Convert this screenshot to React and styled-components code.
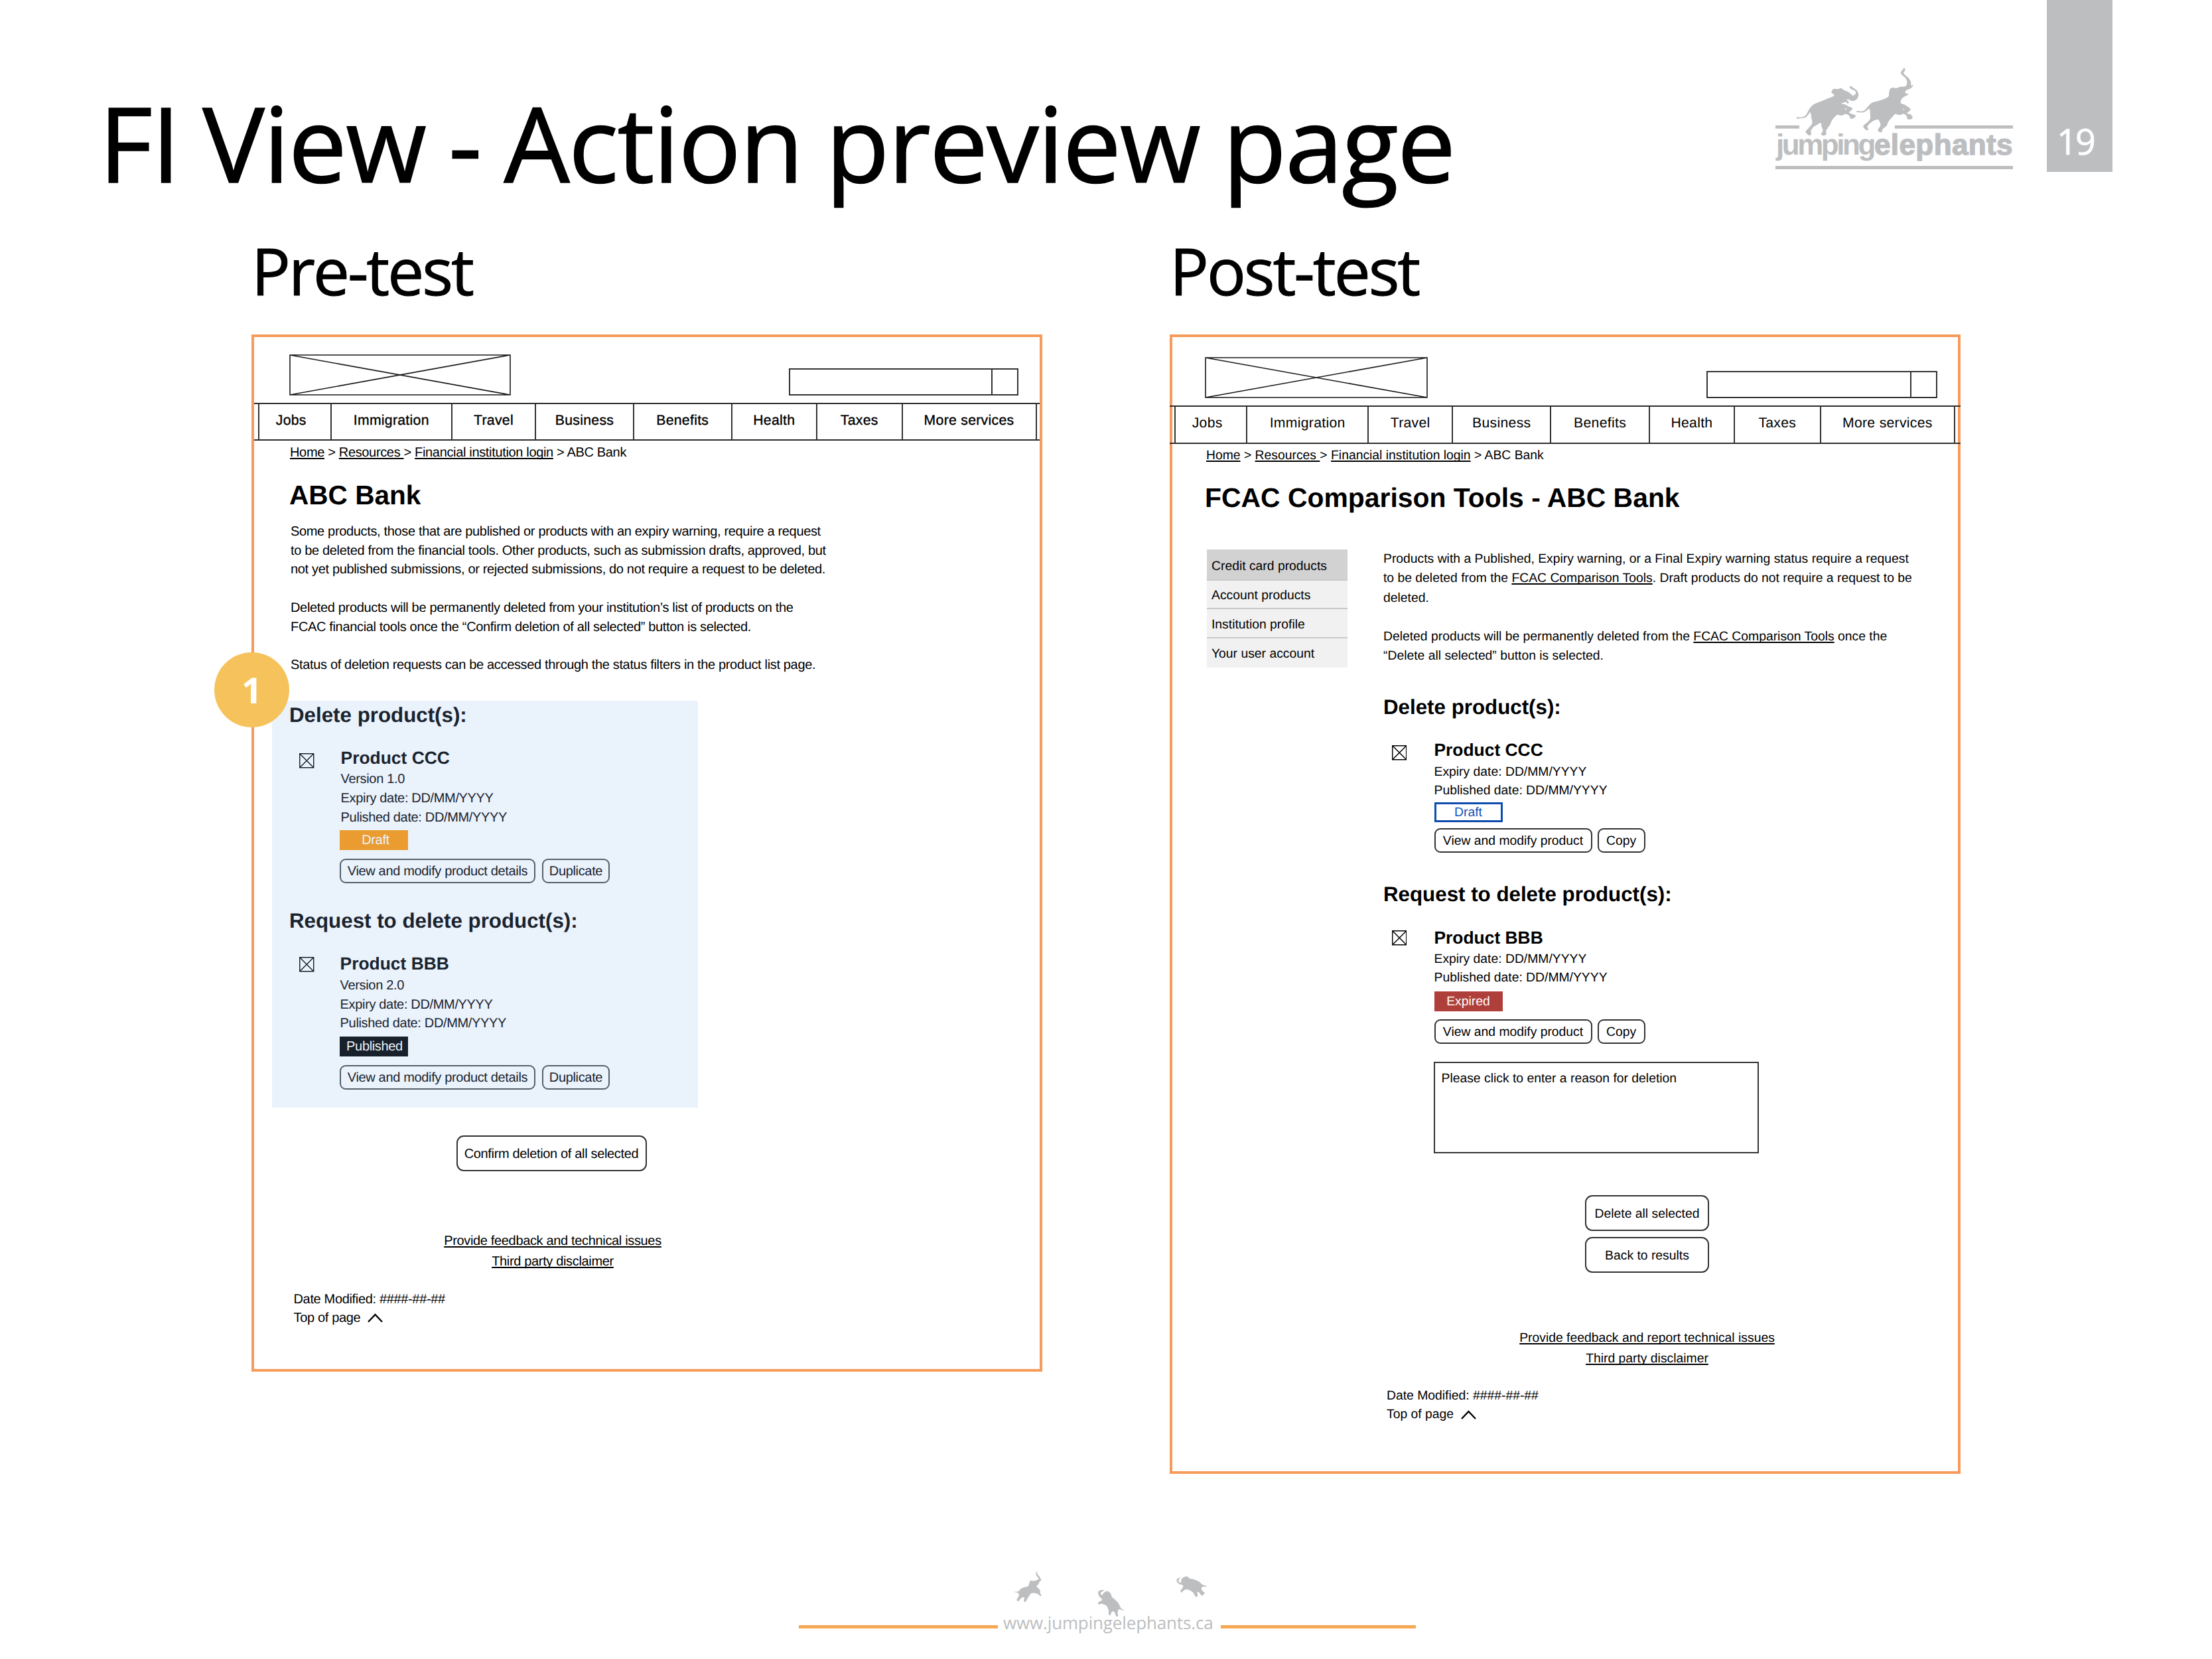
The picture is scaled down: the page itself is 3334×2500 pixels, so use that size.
import React from 'react';
import styled, { createGlobalStyle, css } from 'styled-components';

const Global = createGlobalStyle`
  *, *::before, *::after { box-sizing: border-box; }
  body { margin: 0; background: #fff; }
  h1, h2, h3, h4, p { margin: 0; font-weight: inherit; }
`;

const display = '"Open Sans", "Noto Sans", sans-serif';
const wire = '"Liberation Sans", Arial, sans-serif';
const grey = '#bcbec0';
const orange = '#f79b5b';

const Slide = styled.main`
  width: 3334px;
  height: 2500px;
  overflow: hidden;
  background: #fff;
  color: #000;
  font-family: ${wire};
  text-rendering: geometricPrecision;
  display: flex;
  flex-direction: column;
`;

/* ---------- slide header ---------- */

const SlideHeader = styled.header`
  display: flex;
  align-items: flex-start;
  height: 317px;
  flex: none;
  padding: 0 150px 0 149px;
`;

const SlideTitle = styled.h1`
  margin: 124px auto 0 0;
  font: 400 157px/180px ${display};
  letter-spacing: -1.82px;
  word-spacing: -4px;
  -webkit-text-stroke: 1.5px #000;
  white-space: nowrap;
`;

const Logo = styled.div`
  width: 358px;
  margin: 100px 51px 0 0;
  display: flex;
  flex-direction: column;
  color: ${grey};
`;

const LogoArt = styled.svg`
  display: block;
  width: 358px;
  height: 106.67px;
  overflow: visible;
`;

const Wordmark = styled.div`
  display: flex;
  margin-top: -12.7px;
  font: 700 44px/50px ${wire};
  white-space: nowrap;
`;

const WordLight = styled.span`
  width: 149.4px;
  letter-spacing: -3.46px;
  padding-left: 1px;
`;

const WordHeavy = styled.span`
  -webkit-text-stroke: 1.4px ${grey};
  letter-spacing: 0.4px;
`;

const LogoRule = styled.div`
  height: 5px;
  margin-top: 6px;
  background: ${grey};
`;

const PageTab = styled.div`
  width: 99px;
  height: 259px;
  padding: 0 0 12px 15px;
  display: flex;
  align-items: flex-end;
  background: ${grey};
  color: #fff;
  font: 400 54px/70px ${display};
  letter-spacing: -2.9px;
  -webkit-text-stroke: 0.7px #fff;
`;

/* ---------- columns ---------- */

const Columns = styled.section`
  display: flex;
  gap: 192px;
  height: 1910px;
  flex: none;
  align-items: flex-start;
  padding-left: 379px;
`;

const Column = styled.div`
  width: 1192px;
  flex: none;
`;

const ColumnTitle = styled.h2`
  margin-bottom: 7px;
  font: 400 98px/180px ${display};
  letter-spacing: -3.05px;
  -webkit-text-stroke: 1px #000;
`;

const Frame = styled.article`
  position: relative;
  height: ${(p) => p.$height}px;
  border: 4px solid ${orange};
  font-size: ${(p) => p.$size}px;
  letter-spacing: ${(p) => p.$tracking || 0}px;
  line-height: ${(p) => p.$line}px;
  white-space: nowrap;
`;

const Masthead = styled.div`
  display: flex;
  justify-content: space-between;
  align-items: flex-end;
  height: ${(p) => p.$height}px;
  padding: 0 ${(p) => p.$right}px 11px ${(p) => p.$left}px;
`;

const Placeholder = styled.svg`
  display: block;
  width: ${(p) => p.$width}px;
  height: 62px;
`;

const Search = styled.div`
  display: flex;
  width: ${(p) => p.$width}px;
  height: 41px;
  border: 2px solid #333;
`;

const SearchField = styled.div`
  flex: 1;
  border-right: 2px solid #333;
`;

const SearchButton = styled.div`
  width: 37px;
`;

const NavBar = styled.nav`
  display: grid;
  grid-template-columns: ${(p) => p.$columns};
  height: ${(p) => p.$height}px;
  margin: 0 ${(p) => p.$bleed}px;
  border: solid #2e2e2e;
  border-width: 2px 0;
  font-size: 21.2px;
  letter-spacing: 0.3px;
  line-height: 50px;
  text-align: center;
  -webkit-text-stroke: ${(p) => p.$stroke}px #000;
`;

const NavCell = styled.div`
  border-left: ${(p) => (p.$edge ? 0 : 2)}px solid #333;
  padding-right: ${(p) => (p.$first ? 11 : 0)}px;
`;

const Crumbs = styled.div`
  margin: ${(p) => p.$top}px 0 0 ${(p) => p.$left}px;
  line-height: 28.8px;
  white-space: pre;
`;

const Link = styled.a`
  text-decoration: underline;
  text-decoration-thickness: 1.5px;
  text-underline-offset: 1.5px;
  text-decoration-skip-ink: none;
`;

const BankTitle = styled.h3`
  margin: ${(p) => p.$top}px 0 0 ${(p) => p.$left}px;
  font-weight: 700;
  font-size: ${(p) => p.$size}px;
  letter-spacing: 0;
  line-height: 50px;
`;

const Body = styled.div`
  display: flex;
  align-items: flex-start;
  margin-top: ${(p) => p.$top}px;
  padding-left: ${(p) => p.$left}px;
`;

const Main = styled.div`
  width: ${(p) => p.$width}px;
  flex: none;
`;

const Copy = styled.div`
  display: flex;
  flex-direction: column;
  gap: ${(p) => p.$gap}px;
  padding: ${(p) => p.$top}px 0 0 ${(p) => p.$inset}px;
`;

const SideNav = styled.nav`
  width: 212px;
  margin: 1px 54px 0 0;
  flex: none;
  background: #f1f1f1;
`;

const SideItem = styled.div`
  display: flex;
  align-items: center;
  height: ${(p) => p.$height}px;
  padding: ${(p) => (p.$active ? 6 : 4)}px 0 0 7px;
  border-bottom: ${(p) => (p.$last ? 0 : 2)}px solid #c9c9c9;
  background: ${(p) => (p.$active ? '#d2d2d2' : '#f1f1f1')};
`;

/* ---------- products ---------- */

const Highlight = styled.div`
  width: 642px;
  height: 613px;
  margin: 38.3px 0 0 -26px;
  padding: 2px 0 0 26px;
  background: #eaf2fc;
  color: #1a242e;
`;

const GroupTitle = styled.h4`
  margin-top: ${(p) => p.$top || 0}px;
  font-weight: 700;
  font-size: 31.3px;
  letter-spacing: 0;
  line-height: 40px;
`;

const Product = styled.div`
  display: flex;
  align-items: flex-start;
  margin-top: ${(p) => p.$top}px;
`;

const CheckSlot = styled.div`
  width: ${(p) => p.$width}px;
  flex: none;
  padding: ${(p) => p.$top}px 0 0 ${(p) => p.$left}px;
`;

const CheckSvg = styled.svg`
  display: block;
  width: 22.5px;
  height: 22.5px;
`;

const ProductName = styled.div`
  margin-bottom: 1.5px;
  padding-left: ${(p) => p.$inset}px;
  font-weight: 700;
  font-size: 26.4px;
  letter-spacing: 0;
  line-height: 34px;
`;

const Detail = styled.div`
  padding-left: ${(p) => p.$inset}px;
  line-height: ${(p) => p.$line}px;
`;

const tones = {
  orange: css`
    background: #ea9c30;
    color: #eaf2fc;
  `,
  dark: css`
    background: #18202b;
    color: #eaf2fc;
  `,
  outline: css`
    border: 3px solid #0d4bae;
    color: #1352b8;
    line-height: 25px;
  `,
  red: css`
    background: #af3f3b;
    color: #fff;
  `,
};

const Badge = styled.div`
  width: 103px;
  height: 30px;
  margin-top: ${(p) => p.$top}px;
  padding-left: ${(p) => p.$shift || 0}px;
  text-align: center;
  line-height: 31px;
  ${(p) => tones[p.$tone]}
`;

const Actions = styled.div`
  display: flex;
  gap: ${(p) => p.$gap}px;
  margin-top: ${(p) => p.$top}px;
`;

const Button = styled.button`
  width: ${(p) => p.$width}px;
  height: ${(p) => p.$height || 37}px;
  padding: ${(p) => (p.$height ? 2 : 1)}px 0 0;
  border: 2px solid ${(p) => p.$line || '#333'};
  border-radius: ${(p) => (p.$height ? 11 : 9)}px;
  background: transparent;
  color: inherit;
  font: inherit;
  letter-spacing: inherit;
  text-rendering: inherit;
  line-height: 28px;
  white-space: nowrap;
`;

const Reason = styled.div`
  width: 490px;
  height: 138px;
  margin: 27px 0 0 -1px;
  padding: 9px 10px;
  border: 2px solid #333;
`;

const Stack = styled.div`
  display: flex;
  flex-direction: column;
  align-items: center;
  gap: ${(p) => p.$gap || 0}px;
  margin-top: ${(p) => p.$top}px;
  padding-left: ${(p) => p.$shift || 0}px;
  line-height: ${(p) => p.$line || 31}px;
`;

const Meta = styled.div`
  margin-top: ${(p) => p.$top}px;
  padding-left: ${(p) => p.$left}px;
  line-height: ${(p) => p.$line}px;
`;

const TopLink = styled.div`
  display: flex;
  align-items: center;
  gap: 11px;
`;

const Caret = styled.svg`
  width: 23px;
  height: 14px;
`;

const Marker = styled.div`
  position: absolute;
  left: -60px;
  top: 475px;
  width: 113px;
  height: 113px;
  border-radius: 50%;
  background: #f6c25b;
  color: #fff;
  font: 700 54px/113px ${display};
  letter-spacing: 0;
  text-align: center;
`;

/* ---------- footer ---------- */

const Footer = styled.footer`
  display: flex;
  flex-direction: column;
  margin-top: 138px;
`;

const Herd = styled.svg`
  display: block;
  width: 310px;
  height: 75px;
  margin: 0 0 -12px 1520px;
`;

const FooterLine = styled.div`
  display: flex;
  align-items: center;
  height: 36px;
  padding-left: 1204px;
`;

const Rule = styled.div`
  width: ${(p) => p.$width}px;
  height: 5px;
  margin-top: 11px;
  background: #f7a854;
`;

const Site = styled.div`
  width: 336px;
  margin-top: -2px;
  padding-left: 8px;
  font: 400 26px/36px ${display};
  letter-spacing: -0.14px;
  color: ${grey};
`;

/* ---------- drawings ---------- */

// Closed outline that runs smoothly through the midpoints of the given points.
const outline = (text) => {
  const pts = text.trim().split(/\s+/).map((s) => s.split(',').map(Number));
  const mid = (a, b) => `${(a[0] + b[0]) / 2} ${(a[1] + b[1]) / 2}`;
  const last = pts[pts.length - 1];
  let d = `M${mid(last, pts[0])}`;
  pts.forEach((p, i) => {
    d += `Q${p[0]} ${p[1]} ${mid(p, pts[(i + 1) % pts.length])}`;
  });
  return `${d}Z`;
};

const chargingElephant = outline(`175,533 181,529 192,531 205,529 215,519 222,505 227,493 236,480 247,470 262,463 285,453 305,443 323,436
 327,430 320,424 313,416 320,403 332,401 341,404 351,397 359,402 364,408 376,412 388,421 393,427 398,432 405,432 403,426 408,429
 412,420 409,412 403,407 393,404 387,397 386,389 394,389 398,396 410,403 418,413 422,427 419,443 411,453 399,457 389,455 384,449
 374,450 377,456 383,457 383,464 379,472 376,462 367,461 360,466 352,467 357,471 368,471 378,478 384,484 396,485 398,493 391,502
 382,507 388,511 396,517 406,518 412,524 406,532 393,539 387,532 386,523 378,518 369,514 362,520 352,523 341,519 337,518 331,525
 322,536 314,548 311,562 303,573 297,583 292,594 296,604 290,613 276,613 273,604 279,598 281,590 279,580 274,568 276,561 271,554
 263,561 251,568 242,575 238,583 232,593 236,602 233,613 226,613 218,604 211,597 216,589 226,578 234,567 240,556 238,543 235,530
 234,515 231,505 225,517 216,529 205,534 190,534 180,538`);

const trumpetingElephant = outline(`410,505 418,500 425,504 440,503 450,494 457,483 468,469 480,461 500,457 520,448 541,438 541,425 543,408
 548,398 558,395 570,400 580,393 598,391 610,390 612,378 613,366 606,351 594,341 587,331 590,321 597,313 602,303 607,320 600,323
 598,331 605,340 617,350 626,364 629,379 627,389 641,382 632,394 624,403 611,405 605,414 606,423 623,424 612,431 600,437 592,446
 587,457 588,469 599,470 612,480 625,489 627,496 620,506 610,509 618,515 628,517 636,530 631,539 615,541 612,533 612,524 604,517
 597,513 590,519 578,520 566,513 557,526 545,540 537,553 534,567 527,575 517,583 513,590 516,598 504,598 496,590 500,581 508,570
 508,558 503,548 501,539 486,542 474,550 464,560 456,570 457,578 462,588 452,589 444,581 438,571 446,562 458,551 469,538 467,518
 467,503 465,488 455,499 444,508 430,509 418,507`);

const herd = [
  `22,102 30,100 47,101 52,90 64,83 80,79 92,75 94,60 99,49 110,53 122,50 134,47 138,40 130,33 123,22 127,4 130,20 136,28 143,35
   145,44 152,46 140,55 138,62 133,70 126,76 130,82 140,88 144,100 143,108 151,118 143,122 136,112 125,109 112,106 100,108 93,122
   85,132 80,146 69,149 71,135 72,125 62,127 52,134 48,145 36,141 40,130 48,122 47,108 38,104`,
  `402,154 410,145 420,142 425,135 415,128 406,115 405,100 412,95 430,91 433,96 418,102 416,112 424,117 430,106 445,97 458,102
   466,115 466,125 480,135 493,147 502,160 505,172 514,180 526,184 512,185 502,178 495,185 493,200 498,212 485,214 484,200 476,188
   465,192 462,207 452,208 454,190 450,175 445,165 432,158 418,154 411,160`,
  `758,47 768,38 780,35 772,42 768,52 774,60 782,60 780,50 784,40 795,34 805,30 815,36 818,42 835,44 852,50 866,58 873,66 885,74
   902,75 888,79 874,77 872,88 876,98 890,106 882,115 872,120 866,108 858,100 852,104 857,115 852,127 843,120 838,108 828,98
   815,92 800,90 790,96 784,107 776,98 782,90 790,80 790,70 776,68 765,62`,
].map(outline);

const CrossBox = ({ width }) => (
  <Placeholder $width={width} viewBox={`0 0 ${width} 62`} fill="none" stroke="#1a1a1a" strokeWidth="1.6">
    <path d={`M1 1H${width - 1}V61H1ZM1 1L${width - 1} 61M${width - 1} 1L1 61`} />
  </Placeholder>
);

const Checkbox = () => (
  <CheckSvg viewBox="0 0 23 23" fill="none" stroke="currentColor" strokeWidth="1.5">
    <path d="M.8 .8H22.2V22.2H.8ZM.8 .8L22.2 22.2M22.2 .8L.8 22.2" />
  </CheckSvg>
);

const navItems = ['Jobs', 'Immigration', 'Travel', 'Business', 'Benefits', 'Health', 'Taxes', 'More services'];

const Nav = (props) => (
  <NavBar {...props}>
    <NavCell $edge />
    {navItems.map((item, i) => (
      <NavCell key={item} $first={i === 0}>{item}</NavCell>
    ))}
    <NavCell />
  </NavBar>
);

const Breadcrumb = ({ top, left }) => (
  <Crumbs $top={top} $left={left}>
    <Link>Home</Link>{' > '}<Link>{'Resources '}</Link>{'> '}<Link>Financial institution login</Link>{' > ABC Bank'}
  </Crumbs>
);

const ModifiedInfo = (props) => (
  <Meta {...props}>
    <div>Date Modified: ####-##-##</div>
    <TopLink>
      Top of page
      <Caret viewBox="0 0 23 14" fill="none" stroke="#000" strokeWidth="2.4">
        <path d="M1 13L11.5 2L22 13" />
      </Caret>
    </TopLink>
  </Meta>
);

const PreProduct = ({ name, version, status, tone, shift, top, checkTop, inset }) => (
  <Product $top={top}>
    <CheckSlot $width={76} $top={checkTop} $left={15}><Checkbox /></CheckSlot>
    <div>
      <ProductName $inset={inset}>{name}</ProductName>
      <Detail $inset={inset} $line={28.8}>Version {version}</Detail>
      <Detail $inset={inset} $line={28.8}>Expiry date: DD/MM/YYYY</Detail>
      <Detail $inset={inset} $line={28.8}>Pulished date: DD/MM/YYYY</Detail>
      <Badge $tone={tone} $top={4.5} $shift={shift}>{status}</Badge>
      <Actions $gap={10} $top={13}>
        <Button $width={295} $line="#55606b">View and modify product details</Button>
        <Button $width={102} $line="#55606b">Duplicate</Button>
      </Actions>
    </div>
  </Product>
);

const PostProduct = ({ name, status, tone, top, checkTop, inset, badgeTop, actionsTop, children }) => (
  <Product $top={top}>
    <CheckSlot $width={76.5} $top={checkTop} $left={12.5}><Checkbox /></CheckSlot>
    <div>
      <ProductName $inset={inset}>{name}</ProductName>
      <Detail $inset={inset} $line={28.4}>Expiry date: DD/MM/YYYY</Detail>
      <Detail $inset={inset} $line={28.4}>Published date: DD/MM/YYYY</Detail>
      <Badge $tone={tone} $top={badgeTop}>{status}</Badge>
      <Actions $gap={8} $top={actionsTop}>
        <Button $width={238}>View and modify product</Button>
        <Button $width={72}>Copy</Button>
      </Actions>
      {children}
    </div>
  </Product>
);

const PreTest = () => (
  <Frame $height={1563} $size={20} $tracking={-0.34} $line={28.8}>
    <Masthead $height={99} $left={53} $right={32}>
      <CrossBox width={334} />
      <Search $width={346}><SearchField /><SearchButton /></Search>
    </Masthead>
    <Nav $height={57} $bleed={0} $stroke={0.35} $columns="6px 108.5px 182.5px 126px 148px 147.5px 128.5px 128.5px 202px 1fr" />
    <Breadcrumb top={3.8} left={54} />
    <BankTitle $top={24.2} $left={53} $size={40.6}>ABC Bank</BankTitle>
    <Body $top={14.7} $left={53}>
      <Main $width={790}>
        <Copy $top={1.4} $gap={28.8} $inset={2}>
          <p>
            Some products, those that are published or products with an expiry warning, require a request<br />
            to be deleted from the financial tools. Other products, such as submission drafts, approved, but<br />
            not yet published submissions, or rejected submissions, do not require a request to be deleted.
          </p>
          <p>
            Deleted products will be permanently deleted from your institution’s list of products on the<br />
            FCAC financial tools once the “Confirm deletion of all selected” button is selected.
          </p>
          <p>Status of deletion requests can be accessed through the status filters in the product list page.</p>
        </Copy>
        <Highlight>
          <GroupTitle>Delete product(s):</GroupTitle>
          <PreProduct name="Product CCC" version="1.0" status="Draft" tone="orange" shift={5} top={27} checkTop={10.5} inset={1.6} />
          <GroupTitle $top={36.8}>Request to delete product(s):</GroupTitle>
          <PreProduct name="Product BBB" version="2.0" status="Published" tone="dark" shift={2} top={27.6} checkTop={7} inset={0.6} />
        </Highlight>
        <Stack $top={42.3}>
          <Button $width={287} $height={54}>Confirm deletion of all selected</Button>
        </Stack>
        <Stack $top={90.3} $shift={4}>
          <Link>Provide feedback and technical issues</Link>
          <Link>Third party disclaimer</Link>
        </Stack>
        <ModifiedInfo $top={27} $left={6.5} $line={28.2} />
      </Main>
    </Body>
    <Marker>1</Marker>
  </Frame>
);

const sideItems = [
  ['Credit card products', 47],
  ['Account products', 43.5],
  ['Institution profile', 44],
  ['Your user account', 43.5],
];

const PostTest = () => (
  <Frame $height={1717} $size={19.34} $line={29.15}>
    <Masthead $height={103} $left={49} $right={31}>
      <CrossBox width={336} />
      <Search $width={348}><SearchField /><SearchButton /></Search>
    </Masthead>
    <Nav $height={58} $bleed={-4} $stroke={0} $columns="7px 108.3px 182.7px 127.3px 148px 148.6px 128.1px 129.7px 202.4px 1fr" />
    <Breadcrumb top={3} left={51} />
    <BankTitle $top={24} $left={49} $size={40.9}>FCAC Comparison Tools - ABC Bank</BankTitle>
    <Body $top={52} $left={52}>
      <SideNav>
        {sideItems.map(([label, height], i) => (
          <SideItem key={label} $height={height} $active={i === 0} $last={i === 3}>{label}</SideItem>
        ))}
      </SideNav>
      <Main $width={795}>
        <Copy $top={1.5} $gap={29.15} $inset={0}>
          <p>
            Products with a Published, Expiry warning, or a Final Expiry warning status require a request<br />
            to be deleted from the <Link>FCAC Comparison Tools</Link>. Draft products do not require a request to be<br />
            deleted.
          </p>
          <p>
            Deleted products will be permanently deleted from the <Link>FCAC Comparison Tools</Link> once the<br />
            “Delete all selected” button is selected.
          </p>
        </Copy>
        <GroupTitle $top={42.3}>Delete product(s):</GroupTitle>
        <PostProduct name="Product CCC" status="Draft" tone="outline" top={27.5} checkTop={10} inset={0} badgeTop={3.5} actionsTop={9.5} />
        <GroupTitle $top={42.2}>Request to delete product(s):</GroupTitle>
        <PostProduct name="Product BBB" status="Expired" tone="red" top={28} checkTop={6.5} inset={0} badgeTop={6} actionsTop={12.5}>
          <Reason>Please click to enter a reason for deletion</Reason>
        </PostProduct>
        <Stack $top={62.5} $gap={9.5}>
          <Button $width={187} $height={54}>Delete all selected</Button>
          <Button $width={187} $height={54}>Back to results</Button>
        </Stack>
        <Stack $top={82.5} $line={31.2}>
          <Link>Provide feedback and report technical issues</Link>
          <Link>Third party disclaimer</Link>
        </Stack>
        <ModifiedInfo $top={27.2} $left={5} $line={27.8} />
      </Main>
    </Body>
  </Frame>
);

export default function App() {
  return (
    <Slide>
      <Global />
      <SlideHeader>
        <SlideTitle>FI View - Action preview page</SlideTitle>
        <Logo>
          <LogoArt viewBox="94 300 936 320" preserveAspectRatio="none" fill={grey}>
            <path d={chargingElephant} />
            <path d={trumpetingElephant} />
            <path d="M366 491L373 489L372 497ZM596 492L602 491L601 498Z" fill="#fff" />
            <path d="M94 567H188V581H94ZM564 567H1030V581H564Z" />
          </LogoArt>
          <Wordmark>
            <WordLight>jumping</WordLight>
            <WordHeavy>elephants</WordHeavy>
          </Wordmark>
          <LogoRule />
        </Logo>
        <PageTab>19</PageTab>
      </SlideHeader>
      <Columns>
        <Column>
          <ColumnTitle>Pre-test</ColumnTitle>
          <PreTest />
        </Column>
        <Column>
          <ColumnTitle>Post-test</ColumnTitle>
          <PostTest />
        </Column>
      </Columns>
      <Footer>
        <Herd viewBox="0 0 930 225" fill={grey}>
          {herd.map((d) => <path key={d} d={d} />)}
        </Herd>
        <FooterLine>
          <Rule $width={300} />
          <Site>www.jumpingelephants.ca</Site>
          <Rule $width={294} />
        </FooterLine>
      </Footer>
    </Slide>
  );
}
